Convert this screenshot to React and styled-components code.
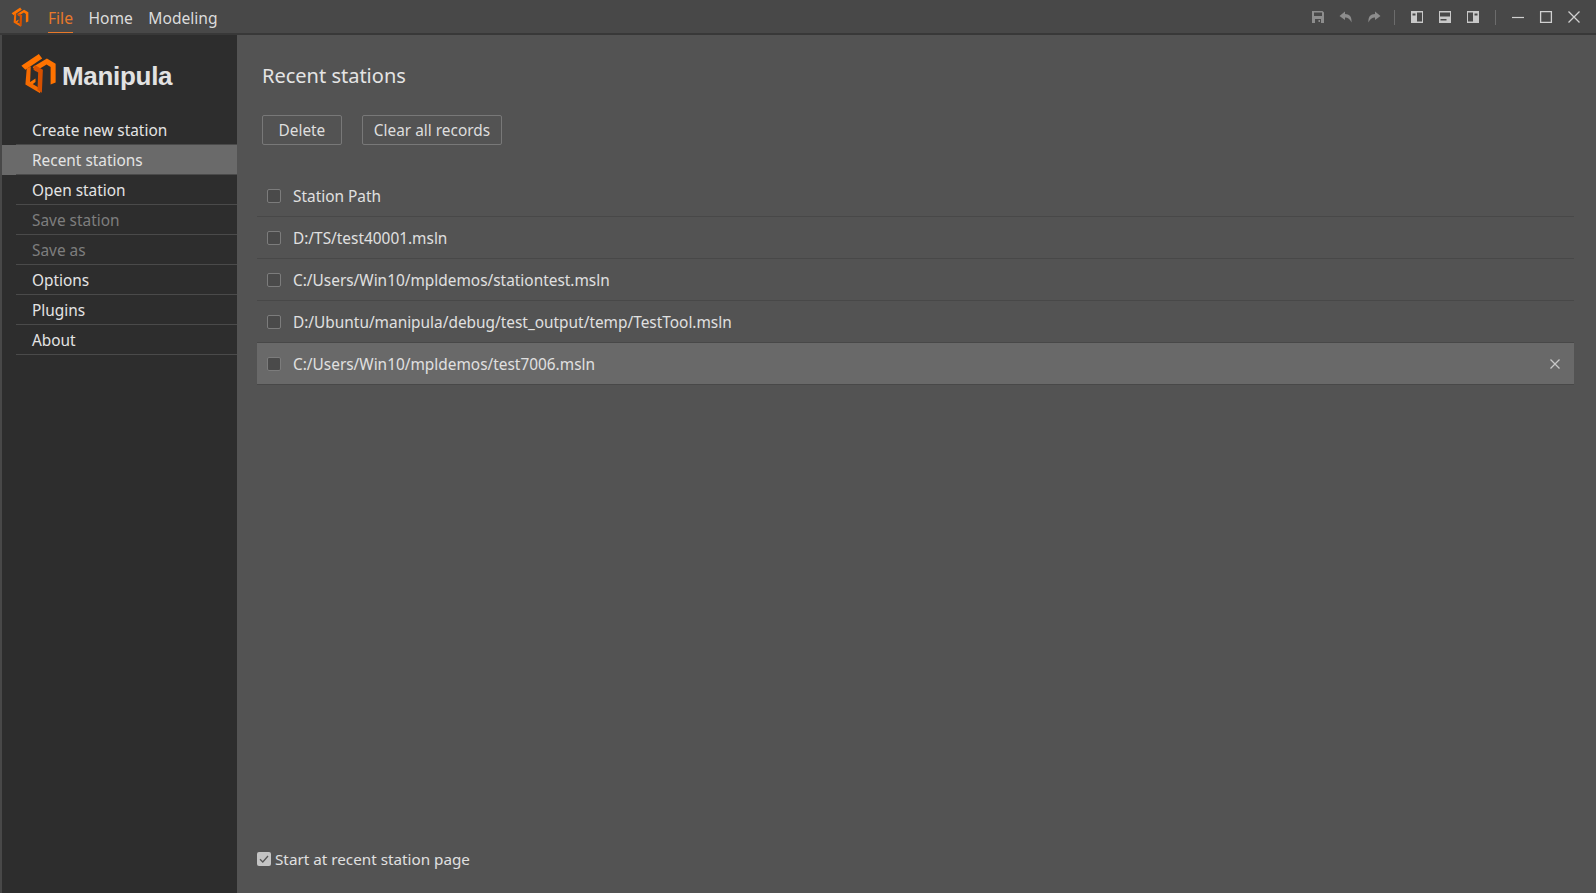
import React from "react";
import styled, { createGlobalStyle } from "styled-components";

const Global = createGlobalStyle`
  html, body { margin: 0; padding: 0; height: 100%; background: #535353; overflow: hidden; }
  #root { height: 100%; }
  * { box-sizing: border-box; }
`;

const Page = styled.div`
  width: 1596px; height: 893px; display: flex; flex-direction: column;
  background: #535353; color: #e4e4e4;
  font-family: "Noto Sans", "Open Sans", sans-serif; font-size: 15.4px;
`;
const TitleBar = styled.header`
  height: 35px; flex: none; display: flex; align-items: center;
  background: #484848; border-bottom: 2px solid #383838; padding: 0 15px 0 11px;
`;
const MenuTabs = styled.nav`
  display: flex; gap: 15.5px; margin-left: 19px; height: 100%; flex: 1;
  font-size: 15.6px;
`;
const MenuTab = styled.span`
  height: 33px; display: flex; align-items: center; padding-top: 3px;
  color: ${p => (p.$active ? "#e8792a" : "#dcdcdc")};
  border-bottom: ${p => (p.$active ? "1px solid #e8792a" : "1px solid transparent")};
`;
const ToolGroup = styled.div`
  display: flex; align-items: center; gap: 14px; height: 33px; padding-top: 1px;
`;
const ToolSep = styled.i`
  width: 1px; height: 15px; background: #6c6c6c;
  margin: 0 1px 0 ${p => (p.$tight ? "-1px" : "1px")};
`;
const ToolIcon = styled.svg`
  width: 14px; height: 14px; flex: none; display: block;
`;
const Body = styled.div`
  flex: 1; display: flex; min-height: 0; padding-left: 2px; background: #484848;
`;
const Sidebar = styled.aside`
  width: 235px; flex: none; background: #2d2d2d; display: flex; flex-direction: column;
`;
const Brand = styled.div`
  height: 80px; flex: none; display: flex; align-items: flex-start; padding: 18px 0 0 18px; gap: 5px;
`;
const BrandName = styled.span`
  font-family: "Liberation Sans", sans-serif; font-weight: 700; font-size: 26px; line-height: 1;
  color: #e2e2e2; margin-top: 10px; letter-spacing: -0.3px;
`;
const NavRow = styled.div`
  height: 30px; flex: none; padding-left: 14px;
  background: ${p => (p.$active ? "#6a6a6a" : "transparent")};
`;
const NavLabel = styled.div`
  height: 100%; display: flex; align-items: center; padding: 1px 0 0 16px;
  border-bottom: 1px solid #4a4a4a;
  color: ${p => (p.$disabled ? "#7e7e7e" : "#e4e4e4")};
`;
const Main = styled.main`
  flex: 1; display: flex; flex-direction: column; padding: 0 22px 0 20px; background: #535353;
`;
const Heading = styled.h1`
  margin: 26px 0 0 5px; font-size: 20px; font-weight: 400; line-height: 30px; color: #e4e4e4;
`;
const Actions = styled.div`
  display: flex; gap: 20px; margin: 24px 0 0 5px;
`;
const Button = styled.button`
  height: 30px; padding: 0 ${p => p.$pad}px; background: transparent; color: #dedede;
  border: 1px solid #787878; border-radius: 2px; font: inherit;
`;
const Table = styled.div`
  margin-top: 30px; display: flex; flex-direction: column;
`;
const Row = styled.div`
  height: 42px; flex: none; display: flex; align-items: center; padding: 0 13px 0 10px; gap: 12px;
  border-bottom: 1px solid #484848;
  background: ${p => (p.$hover ? "#696969" : "transparent")};
`;
const RowText = styled.span`
  flex: 1; color: #e0e0e0; padding-top: 1px;
`;
const Box = styled.span`
  width: 14px; height: 14px; flex: none; border: 1px solid #7c7c7c; border-radius: 2px; background: #4a4a4a;
`;
const RemoveIcon = styled.svg`
  width: 10px; height: 10px; flex: none; display: block; margin-right: 1px;
`;
const Footer = styled.label`
  margin-top: auto; margin-bottom: 24px; display: flex; align-items: center; gap: 4px; color: #e0e0e0;
  font-size: 15.25px;
`;
const CheckedBox = styled.span`
  width: 14px; height: 14px; flex: none; border-radius: 2px; background: #c4c4c4;
  display: flex; align-items: center; justify-content: center;
`;
const LogoSvg = styled.svg`
  display: block; flex: none;
  width: ${p => p.$w}px; height: ${p => p.$h}px;
`;

const Logo = ({ w, h }) => (
  <LogoSvg $w={w} $h={h} viewBox="62 42 110 122">
    <path fill="#ff7300" d="M66 80 118 45 128 58 78 92Z" />
    <path fill="#ff7300" d="M100 84 142 58 168 74V130L153 136V84L141 76 108 96Z" />
    <path fill="#f56a00" d="M82 88 94 82 92 130 122 148V162L78 136Z" />
    <path fill="#d65000" d="M106 78 130 92 127 160 114 152 116 100 102 92Z" />
    <path fill="#ff7300" d="M90 130 108 118V128L98 136Z" />
  </LogoSvg>
);

const Save = () => (
  <ToolIcon viewBox="0 0 14 14"><path fill="#8d8d8d" fillRule="evenodd" d="M1 1h10.5L13 2.5V13H1zM3 2.5V6h8V2.5zM4 9v4h6V9zM7.5 10H9v2H7.5z" /></ToolIcon>
);
const Undo = () => (
  <ToolIcon viewBox="0 0 14 14"><path fill="#8d8d8d" d="M6 1.5.5 6 6 10V7.5c3 0 5 1.5 6.5 5C13 6.5 10.5 4.1 6 4z" /></ToolIcon>
);
const Redo = () => (
  <ToolIcon viewBox="0 0 14 14"><path fill="#8d8d8d" d="M8 1.5 13.5 6 8 10V7.5c-3 0-5 1.5-6.5 5C1 6.5 3.5 4.1 8 4z" /></ToolIcon>
);
const PanelLeft = () => (
  <ToolIcon viewBox="0 0 14 14"><path fill="#c8c8c8" fillRule="evenodd" d="M1 1h12v12H1zM7 2.5v9h5v-9zM2.5 3.5v2h3v-2z" /></ToolIcon>
);
const PanelBottom = () => (
  <ToolIcon viewBox="0 0 14 14"><path fill="#c8c8c8" fillRule="evenodd" d="M1 1h12v12H1zM2 2.5v4h10v-4zM2.5 9v1.5h6V9z" /></ToolIcon>
);
const PanelRight = () => (
  <ToolIcon viewBox="0 0 14 14"><path fill="#c8c8c8" fillRule="evenodd" d="M1 1h12v12H1zM2 2.5v9h5v-9zM8.5 3.5v2h3v-2z" /></ToolIcon>
);
const Minimize = () => (
  <ToolIcon viewBox="0 0 14 14"><path stroke="#d0d0d0" strokeWidth="1.2" d="M1 7.5h12" /></ToolIcon>
);
const Maximize = () => (
  <ToolIcon viewBox="0 0 14 14"><path stroke="#d0d0d0" strokeWidth="1.3" fill="none" d="M1.6 1.6h10.8v10.8H1.6z" /></ToolIcon>
);
const Close = () => (
  <ToolIcon viewBox="0 0 14 14"><path stroke="#d0d0d0" strokeWidth="1.3" d="M1.5 1.5l11 11M12.5 1.5l-11 11" /></ToolIcon>
);

const nav = [
  ["Create new station"],
  ["Recent stations", "active"],
  ["Open station"],
  ["Save station", "disabled"],
  ["Save as", "disabled"],
  ["Options"],
  ["Plugins"],
  ["About"],
];
const rows = [
  "Station Path",
  "D:/TS/test40001.msln",
  "C:/Users/Win10/mpldemos/stationtest.msln",
  "D:/Ubuntu/manipula/debug/test_output/temp/TestTool.msln",
];

export default function App() {
  return (
    <Page>
      <Global />
      <TitleBar>
        <Logo w={18} h={20} />
        <MenuTabs>
          <MenuTab $active>File</MenuTab>
          <MenuTab>Home</MenuTab>
          <MenuTab>Modeling</MenuTab>
        </MenuTabs>
        <ToolGroup>
          <Save /><Undo /><Redo />
          <ToolSep $tight />
          <PanelLeft /><PanelBottom /><PanelRight />
          <ToolSep />
          <Minimize /><Maximize /><Close />
        </ToolGroup>
      </TitleBar>
      <Body>
        <Sidebar>
          <Brand>
            <Logo w={37} h={41} />
            <BrandName>Manipula</BrandName>
          </Brand>
          {nav.map(([t, s]) => (
            <NavRow key={t} $active={s === "active"}>
              <NavLabel $disabled={s === "disabled"}>{t}</NavLabel>
            </NavRow>
          ))}
        </Sidebar>
        <Main>
          <Heading>Recent stations</Heading>
          <Actions>
            <Button $pad={15.5}>Delete</Button>
            <Button $pad={11}>Clear all records</Button>
          </Actions>
          <Table>
            {rows.map(r => (
              <Row key={r}><Box /><RowText>{r}</RowText></Row>
            ))}
            <Row $hover>
              <Box />
              <RowText>C:/Users/Win10/mpldemos/test7006.msln</RowText>
              <RemoveIcon viewBox="0 0 10 10"><path stroke="#c8c8c8" strokeWidth="1.3" d="M.5.5l9 9M9.5.5l-9 9" /></RemoveIcon>
            </Row>
          </Table>
          <Footer>
            <CheckedBox>
              <svg width="10" height="10" viewBox="0 0 10 10"><path fill="none" stroke="#555" strokeWidth="1.3" d="M1 5.2l2.8 2.8L9 2" /></svg>
            </CheckedBox>
            Start at recent station page
          </Footer>
        </Main>
      </Body>
    </Page>
  );
}
